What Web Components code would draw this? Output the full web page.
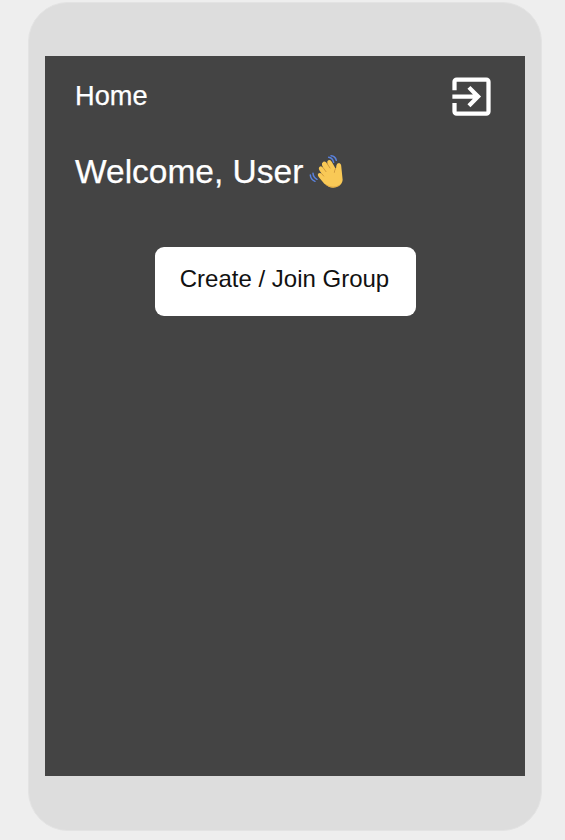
<!DOCTYPE html>
<html lang="en"><head><meta charset="utf-8"><title>Home</title>
<style>html,body{margin:0;height:100%;background:#eee}body{font-family:"Liberation Sans",Arial,sans-serif;overflow:hidden}</style></head>
<body>
<phone-frame>
<page-header>Home</page-header>
<welcome-line>Welcome, User</welcome-line>
<group-button>Create / Join Group</group-button>
</phone-frame>
<script>
const define=(name,html)=>customElements.define(name,class extends HTMLElement{constructor(){super();this.attachShadow({mode:"open"}).innerHTML=html}});
define("exit-icon",`<style>:host{display:block;width:51px;height:51px}svg{display:block;width:100%;height:100%}</style>
<svg viewBox="0 0 24 24" fill="#fff"><path d="M10.09 15.59L11.5 17l5-5-5-5-1.41 1.41L12.67 11H3v2h9.67l-2.58 2.59zM19 3H5c-1.11 0-2 .9-2 2v4h2V5h14v14H5v-4H3v4c0 1.1.89 2 2 2h14c1.1 0 2-.9 2-2V5c0-1.1-.9-2-2-2z"/></svg>`);
define("wave-icon",`<style>:host{display:block;width:38px;height:38px}svg{display:block;width:100%;height:100%}</style>
<svg viewBox="0 0 114 114" fill="none" stroke-linecap="round" stroke-linejoin="round">
<path fill="#f9c956" d="M49 95 L32 75 Q27 68 32 64 Q37 61 42 66 L35 56 Q30 48 35 44 Q40 41 46 48 L42 40 Q40 32 46 29 Q52 26 57 34 L60 38 Q55 28 61 25 Q67 22 72 31 L83 50 Q85 47 85 41 Q86 33 93 33 Q100 35 100 45 L103 74 Q107 92 93 102 Q77 111 62 104 Z"/>
<path stroke="#c99139" stroke-width="2.5" d="M42 66 L47 72 M46 48 L54 59 M57 34 L66 48 M82 51 Q79 56 79 61"/>
<path stroke="#dda23e" stroke-width="2" d="M55 99 Q75 111 94 100"/>
<path stroke="#5a82de" stroke-width="4.5" d="M62 16 Q73 17 77 31 M69 11 Q82 12 85 25 M15 64 Q16 76 27 82 M7 69 Q8 83 21 88"/>
</svg>`);
define("phone-frame",`<style>:host{display:block;box-sizing:border-box;margin:2px 0 0 28px;width:514px;height:829px;background:#ddd;border:1px solid #e3e3e3;padding:53px 16px;border-radius:40px}main{box-sizing:border-box;height:720px;width:480px;background:#444;padding:15px 30px;color:#fff}</style><main><slot></slot></main>`);
define("page-header",`<style>:host{display:flex;justify-content:space-between;align-items:center;height:51px;font-size:27.2px;-webkit-text-stroke:.25px #fff}span{padding-bottom:2px}exit-icon{margin-right:-2px}</style><span><slot></slot></span><exit-icon></exit-icon>`);
define("welcome-line",`<style>:host{display:flex;align-items:center;gap:5px;margin-top:30px;height:40px;font-size:33.5px;white-space:nowrap;-webkit-text-stroke:.25px #fff}wave-icon{margin-bottom:2px}</style><span><slot></slot></span><wave-icon></wave-icon>`);
define("group-button",`<style>:host{display:block;margin:55px auto 0;width:261px}button{display:block;box-sizing:border-box;width:100%;height:69px;border:0;border-radius:9px;background:#fff;color:#111;font:24px "Liberation Sans",Arial,sans-serif;padding:0 1px 5px 0}</style><button><slot></slot></button>`);
</script></body></html>
